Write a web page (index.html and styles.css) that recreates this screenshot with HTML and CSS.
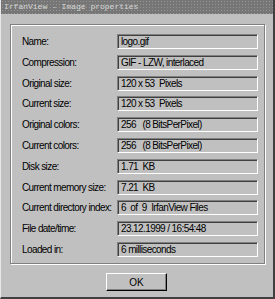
FILE: index.html
```html
<!DOCTYPE html>
<html lang="en">

<head>
  <meta charset="UTF-8">
  <title>IrfanView - Image properties</title>
  <link rel="stylesheet" href="styles.css">
</head>

<body>
  <div class="window">
    <div class="titlebar">IrfanView - Image properties</div>

    <div class="groupbox">
      <div class="row">
        <label>Name:</label>
        <div class="value">logo.gif</div>
      </div>
      <div class="row">
        <label>Compression:</label>
        <div class="value">GIF - LZW, interlaced</div>
      </div>
      <div class="row">
        <label>Original size:</label>
        <div class="value">120 x 53&nbsp; Pixels</div>
      </div>
      <div class="row">
        <label>Current size:</label>
        <div class="value">120 x 53&nbsp; Pixels</div>
      </div>
      <div class="row">
        <label>Original colors:</label>
        <div class="value">256&nbsp;&nbsp; (8 BitsPerPixel)</div>
      </div>
      <div class="row">
        <label>Current colors:</label>
        <div class="value">256&nbsp;&nbsp; (8 BitsPerPixel)</div>
      </div>
      <div class="row">
        <label>Disk size:</label>
        <div class="value">1.71&nbsp; KB</div>
      </div>
      <div class="row">
        <label>Current memory size:</label>
        <div class="value">7.21&nbsp; KB</div>
      </div>
      <div class="row">
        <label>Current directory index:</label>
        <div class="value">6&nbsp; of&nbsp; 9&nbsp; IrfanView Files</div>
      </div>
      <div class="row">
        <label>File date/time:</label>
        <div class="value">23.12.1999 / 16:54:48</div>
      </div>
      <div class="row">
        <label>Loaded in:</label>
        <div class="value">6 milliseconds</div>
      </div>
    </div>

    <div class="buttons">
      <button type="button">OK</button>
    </div>
  </div>
</body>

</html>
```

FILE: styles.css
```css
* {
  box-sizing: border-box;
}

body {
  margin: 0;
  background: #c0c0c0;
  font-family: 'Liberation Sans', Arial, sans-serif;
  font-size: 10px;
  letter-spacing: -0.6px;
  color: #000;
}

.window {
  width: 275px;
  height: 299px;
  background: #c0c0c0;
  border-left: 1px solid #e8e8e8;
  border-right: 2px solid #404040;
  border-bottom: 2px solid #404040;
}

.titlebar {
  height: 14px;
  padding-left: 3px;
  background-color: #767676;
  background-image: radial-gradient(circle, #959595 0.6px, transparent 0.8px);
  background-size: 3px 3px;
  color: #d8d8d8;
  font-family: 'Liberation Mono', monospace;
  font-size: 8px;
  letter-spacing: 0;
  line-height: 14px;
  white-space: nowrap;
}

.groupbox {
  margin: 10px 0 0 9px;
  width: 255px;
  height: 240px;
  padding: 9px 5px 0 11px;
  border: 1px solid #808080;
  box-shadow: inset 1px 1px #fff, 1px 1px #fff;
  display: grid;
  grid-template-rows: repeat(11, 15px);
  row-gap: 5.8px;
}

.row {
  display: grid;
  grid-template-columns: 95px 141px;
  align-items: center;
}

.row label {
  white-space: nowrap;
}

.value {
  height: 15px;
  padding-left: 3px;
  line-height: 13px;
  white-space: nowrap;
  border: 1px solid;
  border-color: #808080 #fff #fff #808080;
  box-shadow: inset 1px 1px #404040;
}

.buttons {
  display: flex;
  justify-content: center;
  margin-top: 9px;
  padding-right: 1px;
}

button {
  width: 61px;
  height: 18px;
  padding: 0;
  background: #c0c0c0;
  font-family: inherit;
  font-size: 10px;
  letter-spacing: 0;
  color: #000;
  border: 1px solid;
  border-color: #fff #000 #000 #fff;
  box-shadow: inset -1px -1px #808080;
}
```
